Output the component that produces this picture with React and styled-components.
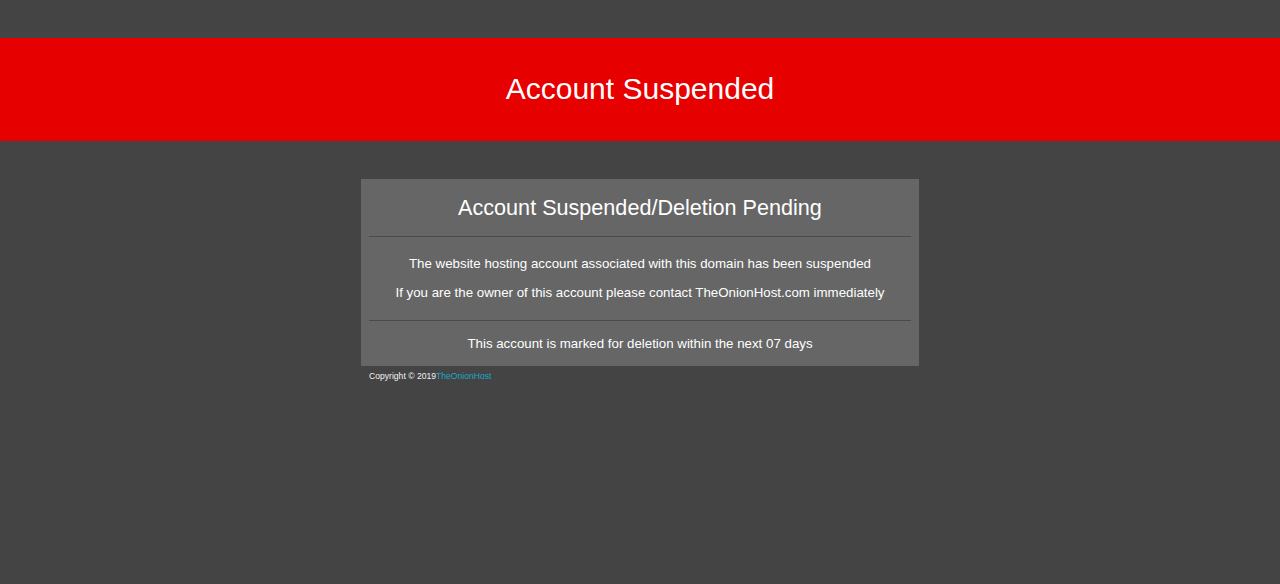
import styled, { createGlobalStyle } from "styled-components";

const GlobalStyle = createGlobalStyle`
  html, body {
    margin: 0;
    padding: 0;
    background: #444444;
    font-family: "Liberation Sans", Arial, sans-serif;
  }
`;

const Page = styled.div`
  min-height: 584px;
  padding-top: 38px;
  background: #444444;
  box-sizing: border-box;
`;

const Banner = styled.header`
  height: 103px;
  padding-bottom: 2px;
  box-sizing: border-box;
  background: #e60000;
  display: flex;
  align-items: center;
  justify-content: center;
`;

const BannerTitle = styled.h1`
  margin: 0;
  font-size: 30px;
  font-weight: normal;
  color: #ffffff;
`;

const Wrap = styled.div`
  width: 558px;
  margin: 38px auto 0;
`;

const Card = styled.section`
  background: #666666;
  padding: 11px 8px 12px 8px;
  text-align: center;
  color: #ffffff;
`;

const CardTitle = styled.h2`
  margin: 0;
  font-size: 21.6px;
  font-weight: normal;
  line-height: 36px;
`;

const Rule = styled.hr`
  border: 0;
  height: 1px;
  background: #4a4a4a;
  margin: ${(p) => p.$top}px 0 0 0;
`;

const Line = styled.p`
  margin: ${(p) => p.$top}px 0 0 0;
  font-size: 13.3px;
  line-height: 20px;
`;

const Footer = styled.footer`
  margin-top: 4px;
  padding-left: 8px;
  font-size: 8.6px;
  line-height: 12px;
  color: #f2f2f2;
`;

const Brand = styled.a`
  color: #1ba8c8;
  text-decoration: none;
`;

export default function App() {
  return (
    <>
      <GlobalStyle />
      <Page>
        <Banner>
          <BannerTitle>Account Suspended</BannerTitle>
        </Banner>
        <Wrap>
          <Card>
            <CardTitle>Account Suspended/Deletion Pending</CardTitle>
            <Rule $top={10} />
            <Line $top={17}>
              The website hosting account associated with this domain has been suspended
            </Line>
            <Line $top={9}>
              If you are the owner of this account please contact TheOnionHost.com immediately
            </Line>
            <Rule $top={17} />
            <Line $top={13}>This account is marked for deletion within the next 07 days</Line>
          </Card>
          <Footer>
            Copyright © 2019<Brand href="#">TheOnionHost</Brand>
          </Footer>
        </Wrap>
      </Page>
    </>
  );
}
